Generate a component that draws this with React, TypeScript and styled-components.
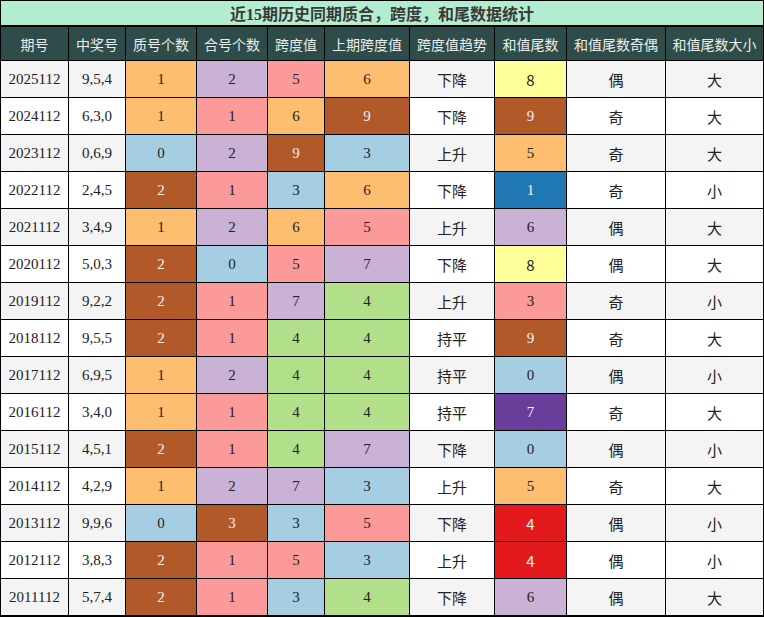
import React from "react";
import styled, { createGlobalStyle } from "styled-components";

const GlobalStyle = createGlobalStyle`
  html, body { margin: 0; padding: 0; background: #ffffff; }
  body { font-family: "Liberation Serif", "Noto Sans CJK SC", serif; }
`;

const COLORS: Record<string, string> = {
  orange: "#fdbf6f",
  lavender: "#cab2d6",
  pink: "#fb9a99",
  brown: "#b15928",
  lightblue: "#a6cee3",
  green: "#b2df8a",
  yellow: "#ffff99",
  blue: "#1f78b4",
  purple: "#6a3d9a",
  red: "#e31a1c",
};

const DARK = new Set(["brown", "blue", "purple", "red"]);

const Board = styled.div`
  display: grid;
  grid-template-columns: 67px 56px 70px 70px 56px 84px 84px 71px 98px 97px;
  grid-template-rows: 25px 33px repeat(15, 36px);
  gap: 1px;
  padding: 1px 1px 2px 1px;
  background: #000000;
  width: 764px;
  box-sizing: border-box;
`;

const Title = styled.div`
  grid-column: 1 / -1;
  background: #b3edcf;
  border-bottom: 1px solid #000;
  box-sizing: border-box;
  display: flex;
  align-items: center;
  justify-content: center;
  font-family: "Liberation Serif", "Noto Sans CJK SC", serif;
  font-weight: bold;
  font-size: 16px;
  color: #3a3a3a;
  padding-bottom: 1px;
`;

const HeadCell = styled.div`
  background: #2e4d4a;
  color: #ececec;
  font-family: "Noto Sans CJK SC", sans-serif;
  font-size: 14px;
  display: flex;
  align-items: center;
  justify-content: center;
  white-space: nowrap;
`;

const Row = styled.div`
  display: contents;
`;

const Cell = styled.div<{ $bg: string; $dark?: boolean; $sans?: boolean }>`
  background: ${(p) => p.$bg};
  color: ${(p) => (p.$dark ? "#f2f2f2" : "#222222")};
  font-family: ${(p) =>
    p.$sans
      ? `"Noto Sans CJK SC", sans-serif`
      : `"Liberation Serif", "Noto Sans CJK SC", serif`};
  font-size: 15px;
  display: flex;
  align-items: center;
  justify-content: center;
  white-space: nowrap;
`;

const TextCell = styled(Cell)`
  font-family: "Noto Sans CJK SC", sans-serif;
  font-size: 15px;
`;

type C = [string | number, string];
type RowData = {
  issue: string;
  nums: string;
  prime: C;
  comp: C;
  span: C;
  prev: C;
  trend: string;
  tail: C;
  oe: string;
  bs: string;
};

const rows: RowData[] = [
  { issue: "2025112", nums: "9,5,4", prime: [1, "orange"], comp: [2, "lavender"], span: [5, "pink"], prev: [6, "orange"], trend: "下降", tail: [8, "yellow"], oe: "偶", bs: "大" },
  { issue: "2024112", nums: "6,3,0", prime: [1, "orange"], comp: [1, "pink"], span: [6, "orange"], prev: [9, "brown"], trend: "下降", tail: [9, "brown"], oe: "奇", bs: "大" },
  { issue: "2023112", nums: "0,6,9", prime: [0, "lightblue"], comp: [2, "lavender"], span: [9, "brown"], prev: [3, "lightblue"], trend: "上升", tail: [5, "orange"], oe: "奇", bs: "大" },
  { issue: "2022112", nums: "2,4,5", prime: [2, "brown"], comp: [1, "pink"], span: [3, "lightblue"], prev: [6, "orange"], trend: "下降", tail: [1, "blue"], oe: "奇", bs: "小" },
  { issue: "2021112", nums: "3,4,9", prime: [1, "orange"], comp: [2, "lavender"], span: [6, "orange"], prev: [5, "pink"], trend: "上升", tail: [6, "lavender"], oe: "偶", bs: "大" },
  { issue: "2020112", nums: "5,0,3", prime: [2, "brown"], comp: [0, "lightblue"], span: [5, "pink"], prev: [7, "lavender"], trend: "下降", tail: [8, "yellow"], oe: "偶", bs: "大" },
  { issue: "2019112", nums: "9,2,2", prime: [2, "brown"], comp: [1, "pink"], span: [7, "lavender"], prev: [4, "green"], trend: "上升", tail: [3, "pink"], oe: "奇", bs: "小" },
  { issue: "2018112", nums: "9,5,5", prime: [2, "brown"], comp: [1, "pink"], span: [4, "green"], prev: [4, "green"], trend: "持平", tail: [9, "brown"], oe: "奇", bs: "大" },
  { issue: "2017112", nums: "6,9,5", prime: [1, "orange"], comp: [2, "lavender"], span: [4, "green"], prev: [4, "green"], trend: "持平", tail: [0, "lightblue"], oe: "偶", bs: "小" },
  { issue: "2016112", nums: "3,4,0", prime: [1, "orange"], comp: [1, "pink"], span: [4, "green"], prev: [4, "green"], trend: "持平", tail: [7, "purple"], oe: "奇", bs: "大" },
  { issue: "2015112", nums: "4,5,1", prime: [2, "brown"], comp: [1, "pink"], span: [4, "green"], prev: [7, "lavender"], trend: "下降", tail: [0, "lightblue"], oe: "偶", bs: "小" },
  { issue: "2014112", nums: "4,2,9", prime: [1, "orange"], comp: [2, "lavender"], span: [7, "lavender"], prev: [3, "lightblue"], trend: "上升", tail: [5, "orange"], oe: "奇", bs: "大" },
  { issue: "2013112", nums: "9,9,6", prime: [0, "lightblue"], comp: [3, "brown"], span: [3, "lightblue"], prev: [5, "pink"], trend: "下降", tail: [4, "red"], oe: "偶", bs: "小" },
  { issue: "2012112", nums: "3,8,3", prime: [2, "brown"], comp: [1, "pink"], span: [5, "pink"], prev: [3, "lightblue"], trend: "上升", tail: [4, "red"], oe: "偶", bs: "小" },
  { issue: "2011112", nums: "5,7,4", prime: [2, "brown"], comp: [1, "pink"], span: [3, "lightblue"], prev: [4, "green"], trend: "下降", tail: [6, "lavender"], oe: "偶", bs: "大" },
];

const headers = [
  "期号",
  "中奖号",
  "质号个数",
  "合号个数",
  "跨度值",
  "上期跨度值",
  "跨度值趋势",
  "和值尾数",
  "和值尾数奇偶",
  "和值尾数大小",
];

const SANS_KEYS = new Set(["yellow", "red"]);

function ColorCell({ c }: { c: C }) {
  return (
    <Cell $bg={COLORS[c[1]]} $dark={DARK.has(c[1])} $sans={SANS_KEYS.has(c[1])}>
      {c[0]}
    </Cell>
  );
}

export default function App() {
  return (
    <>
      <GlobalStyle />
      <Board>
        <Title>近15期历史同期质合，跨度，和尾数据统计</Title>
        {headers.map((h) => (
          <HeadCell key={h}>{h}</HeadCell>
        ))}
        {rows.map((r, i) => {
          const bg = i % 2 === 0 ? "#f4f4f4" : "#ffffff";
          return (
            <Row key={r.issue}>
              <Cell $bg={bg}>{r.issue}</Cell>
              <Cell $bg={bg}>{r.nums}</Cell>
              <ColorCell c={r.prime} />
              <ColorCell c={r.comp} />
              <ColorCell c={r.span} />
              <ColorCell c={r.prev} />
              <TextCell $bg={bg}>{r.trend}</TextCell>
              <ColorCell c={r.tail} />
              <TextCell $bg={bg}>{r.oe}</TextCell>
              <TextCell $bg={bg}>{r.bs}</TextCell>
            </Row>
          );
        })}
      </Board>
    </>
  );
}
